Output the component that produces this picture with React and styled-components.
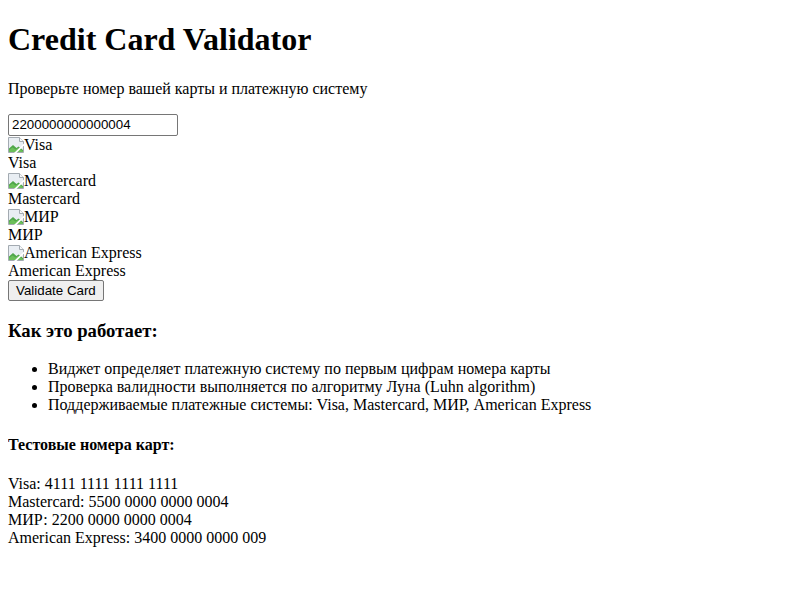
import styled, { createGlobalStyle } from 'styled-components';

const Global = createGlobalStyle`
  body {
    margin: 0 8px 8px;
    font-family: "Liberation Serif", "Times New Roman", serif;
    font-size: 16px;
    color: #000;
    background: #fff;
  }
`

const Title = styled.h1`
  font-size: 32px;
  font-weight: bold;
  margin: 21.44px 0;
`

const Lead = styled.p`
  margin: 16px 0;
`

const CardInput = styled.input`
  box-sizing: border-box;
  width: 170px;
  height: 22px;
  padding: 1px 3px;
  border: 1px solid #767676;
  border-radius: 2px;
  font-family: "Liberation Sans", Arial, sans-serif;
  font-size: 13.33px;
  color: #000;
`

const Brand = styled.div``

const Broken = styled.span`
  svg {
    vertical-align: top;
    margin-top: 1px;
  }
`

const Label = styled.div``

const Button = styled.button`
  font-family: "Liberation Sans", Arial, sans-serif;
  font-size: 13.33px;
  color: #000;
  background: #efefef;
  border: 1px solid #767676;
  border-radius: 2px;
  padding: 1px 7px;
  height: 21px;
`

const SubTitle = styled.h3`
  font-size: 18.72px;
  margin: 18.72px 0;
`

const List = styled.ul`
  margin: 16px 0;
  padding-left: 40px;
`

const MinorTitle = styled.h4`
  font-size: 16px;
  margin: 21.28px 0;
`

const Numbers = styled.p`
  margin: 16px 0;
`

function BrokenIcon() {
  return (
    <svg width="16" height="16" viewBox="0 0 16 16">
      <path d="M0.5 0.5h11l4 4v11h-15z" fill="#e9eef3" stroke="#a3aab1" />
      <path d="M11.5 0.5v4h4" fill="#f7f9fb" stroke="#a3aab1" />
      <path d="M1 15V11.5l4-3.5 3.5 3 2-1.5 4.5 3.5V15z" fill="#4fa64a" />
      <path d="M1 15V13l3.5-2.5 3 2 2.5-1.5 5 3V15z" fill="#6bbf5a" />
      <path d="M6 16L16 6.5V8.5L8.5 16z" fill="#fff" />
    </svg>
  );
}

const brands = ['Visa', 'Mastercard', 'МИР', 'American Express'];

export default function App() {
  return (
    <>
      <Global />
      <Title>Credit Card Validator</Title>
      <Lead>Проверьте номер вашей карты и платежную систему</Lead>
      <div>
        <CardInput defaultValue="2200000000000004" />
      </div>
      {brands.map((b) => (
        <Brand key={b}>
          <Broken><BrokenIcon />{b}</Broken>
          <Label>{b}</Label>
        </Brand>
      ))}
      <Button>Validate Card</Button>
      <SubTitle>Как это работает:</SubTitle>
      <List>
        <li>Виджет определяет платежную систему по первым цифрам номера карты</li>
        <li>Проверка валидности выполняется по алгоритму Луна (Luhn algorithm)</li>
        <li>Поддерживаемые платежные системы: Visa, Mastercard, МИР, American Express</li>
      </List>
      <MinorTitle>Тестовые номера карт:</MinorTitle>
      <Numbers>
        Visa: 4111 1111 1111 1111<br />
        Mastercard: 5500 0000 0000 0004<br />
        МИР: 2200 0000 0000 0004<br />
        American Express: 3400 0000 0000 009
      </Numbers>
    </>
  );
}
